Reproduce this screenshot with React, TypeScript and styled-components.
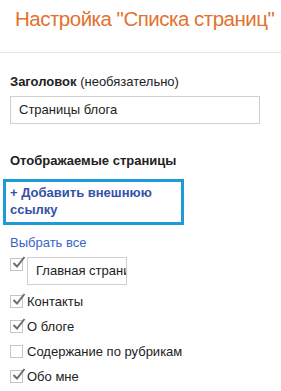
import React from "react";
import styled, { createGlobalStyle } from "styled-components";

const Global = createGlobalStyle`
  html, body { margin: 0; padding: 0; background: #fff; }
  body { font-family: "Liberation Sans", Arial, sans-serif; color: #222; }
`;

const Page = styled.div`
  width: 281px;
  height: 391px;
  overflow: hidden;
`;

const Header = styled.div`
  height: 52px;
  border-bottom: 1px solid #e5e5e5;
  padding-left: 15px;
  box-sizing: content-box;
`;

const Title = styled.h1`
  margin: 0;
  padding-top: 6px;
  font-size: 20.5px;
  line-height: 26px;
  letter-spacing: -0.5px;
  font-weight: normal;
  color: #e2722f;
  white-space: nowrap;
`;

const Body = styled.div`
  padding: 21px 0 0 10px;
  display: flex;
  flex-direction: column;
`;

const Label = styled.div`
  font-size: 13px;
  line-height: 16px;
  font-weight: bold;
  color: #222;
  span { font-weight: normal; }
`;

const TextBox = styled.div<{ $w: number }>`
  box-sizing: border-box;
  width: ${(p) => p.$w}px;
  height: 28px;
  border: 1px solid #d0d0d0;
  padding: 0 8px;
  font-size: 13px;
  line-height: 26px;
  color: #222;
  white-space: nowrap;
  overflow: hidden;
`;

const SectionLabel = styled(Label)`
  margin-top: 29px;
`;

const AddBox = styled.div`
  margin: 10px 0 0 -7px;
  width: 181px;
  height: 46px;
  box-sizing: border-box;
  border: 3px solid #1d9ad8;
  padding: 2px 0 0 4px;
  font-size: 13px;
  line-height: 17px;
  font-weight: bold;
  color: #3450a8;
`;

const SelectAll = styled.div`
  margin-top: 10px;
  font-size: 13px;
  line-height: 16px;
  color: #3b64c4;
`;

const List = styled.div`
  display: flex;
  flex-direction: column;
`;

const Row = styled.div<{ $mt: number }>`
  display: flex;
  align-items: flex-start;
  gap: 4px;
  margin-top: ${(p) => p.$mt}px;
  font-size: 13px;
  line-height: 15px;
  color: #222;
`;

const Box = styled.span`
  position: relative;
  width: 13px;
  height: 13px;
  box-sizing: border-box;
  border: 1px solid #c6c6c6;
  flex: none;
  svg {
    position: absolute;
    left: 1px;
    top: -4px;
  }
`;

const Check = () => (
  <svg width="14" height="14" viewBox="0 0 14 14">
    <path d="M1.5 8 L5 11.5 L12.5 2" fill="none" stroke="#6e6e6e" strokeWidth="2" />
  </svg>
);

const CheckBox = ({ on }: { on: boolean }) => <Box>{on && <Check />}</Box>;

const Item = styled.span`
  margin-top: -1px;
`;

export default function App() {
  return (
    <Page>
      <Global />
      <Header>
        <Title>Настройка "Списка страниц"</Title>
      </Header>
      <Body>
        <Label>
          Заголовок <span>(необязательно)</span>
        </Label>
        <TextBox $w={250} style={{ marginTop: 6 }}>Страницы блога</TextBox>
        <SectionLabel>Отображаемые страницы</SectionLabel>
        <AddBox>
          + Добавить внешнюю
          <br />
          ссылку
        </AddBox>
        <SelectAll>Выбрать все</SelectAll>
        <List>
          <Row $mt={7}>
            <CheckBox on />
            <TextBox $w={100} style={{ marginTop: -1 }}>Главная страница</TextBox>
          </Row>
          <Row $mt={10}>
            <CheckBox on />
            <Item>Контакты</Item>
          </Row>
          <Row $mt={11}>
            <CheckBox on />
            <Item>О блоге</Item>
          </Row>
          <Row $mt={11}>
            <CheckBox on={false} />
            <Item>Содержание по рубрикам</Item>
          </Row>
          <Row $mt={11}>
            <CheckBox on />
            <Item>Обо мне</Item>
          </Row>
        </List>
      </Body>
    </Page>
  );
}
